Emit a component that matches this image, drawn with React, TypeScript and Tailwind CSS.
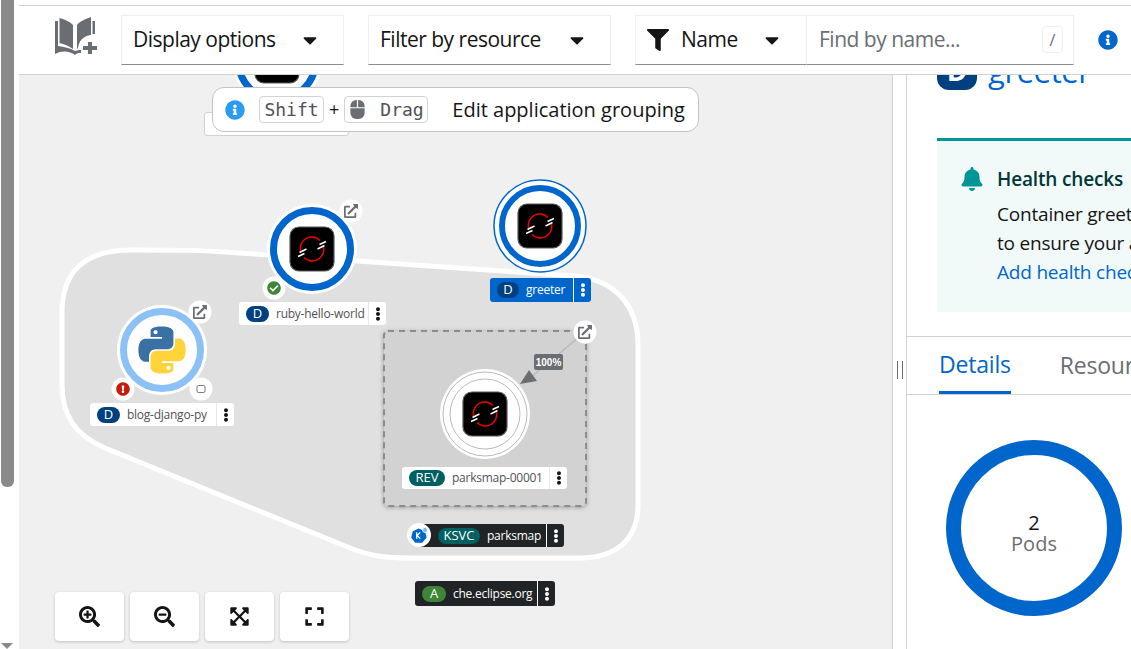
import React from 'react';
import {
  FaBell,
  FaCaretDown,
  FaCheckCircle,
  FaEllipsisV,
  FaExclamationCircle,
  FaExpand,
  FaExpandArrowsAlt,
  FaExternalLinkAlt,
  FaFilter,
  FaInfoCircle,
  FaMouse,
  FaSearchMinus,
  FaSearchPlus,
} from 'react-icons/fa';

const SANS = "font-['Open_Sans','Noto_Sans',sans-serif]";

const PY_BLUE =
  'M14.25.18l.9.2.73.26.59.3.45.32.34.34.25.34.16.33.1.3.04.26.02.2-.01.13V8.5l-.05.63-.13.55-.21.46-.26.38-.3.31-.33.25-.35.19-.35.14-.33.1-.3.07-.26.04-.21.02H8.77l-.69.05-.59.14-.5.22-.41.27-.33.32-.27.35-.2.36-.15.37-.1.35-.07.32-.04.27-.02.21v3.06H3.17l-.21-.03-.28-.07-.32-.12-.35-.18-.36-.26-.36-.36-.35-.46-.32-.59-.28-.73-.21-.88-.14-1.05-.05-1.23.06-1.22.16-1.04.24-.87.32-.71.36-.57.4-.44.42-.33.42-.24.4-.16.36-.1.32-.05.24-.01h.16l.06.01h8.16v-.83H6.18l-.01-2.75-.02-.37.05-.34.11-.31.17-.28.25-.26.31-.23.38-.2.44-.18.51-.15.58-.12.64-.1.71-.06.77-.04.84-.02 1.27.05zm-6.3 1.98l-.23.33-.08.41.08.41.23.34.33.22.41.09.41-.09.33-.22.23-.34.08-.41-.08-.41-.23-.33-.33-.22-.41-.09-.41.09z';
const PY_YELLOW =
  'M21.04 6.11l.28.06.32.12.35.18.36.27.36.35.35.47.32.59.28.73.21.88.14 1.04.05 1.23-.06 1.23-.16 1.04-.24.86-.32.71-.36.57-.4.45-.42.33-.42.24-.4.16-.36.09-.32.05-.24.02-.16-.01h-8.22v.82h5.84l.01 2.76.02.36-.05.34-.11.31-.17.29-.25.25-.31.24-.38.2-.44.17-.51.15-.58.13-.64.09-.71.07-.77.04-.84.01-1.27-.04-1.07-.14-.9-.2-.73-.25-.59-.3-.45-.33-.34-.34-.25-.34-.16-.33-.1-.3-.04-.25-.02-.2.01-.13v-5.34l.05-.64.13-.54.21-.46.26-.38.3-.32.33-.24.35-.2.35-.14.33-.1.3-.06.26-.04.21-.02.13-.01h5.84l.69-.05.59-.14.5-.21.41-.28.33-.32.27-.35.2-.36.15-.36.1-.35.07-.32.04-.28.02-.21V6.07h2.09l.14.01zm-6.47 14.25l-.23.33-.08.41.08.41.23.33.33.23.41.08.41-.08.33-.23.23-.33.08-.41-.08-.41-.23-.33-.33-.23-.41-.08-.41.08z';

const ShiftLogo = ({ cx, cy }: { cx: number; cy: number }) => (
  <g transform={`translate(${cx} ${cy})`}>
    <rect x="-22" y="-22" width="44" height="44" rx="9" fill="#000" stroke="#55585c" strokeWidth="1.2" />
    <path d="M-11.5 2A11.5 11.5 0 0 1 8 -8.5" fill="none" stroke="#e00" strokeWidth="1.6" />
    <path d="M11.5 -2A11.5 11.5 0 0 1 -8 8.5" fill="none" stroke="#e00" strokeWidth="1.6" />
    <path d="M7.5 -4.5L14 -7.5M5.5 0L12.5 -3.5M-14 7.5L-7.5 4.5M-12.5 3.5L-5.5 0" stroke="#fff" strokeWidth="1.4" />
  </g>
);

const Node = ({ cx, cy, ring = '#06c' }: { cx: number; cy: number; ring?: string }) => (
  <g>
    <circle cx={cx} cy={cy} r="45" fill="#fff" />
    <circle cx={cx} cy={cy} r="38.5" fill="none" stroke={ring} strokeWidth="7" />
  </g>
);

const Decorator = ({ cx, cy }: { cx: number; cy: number }) => (
  <circle cx={cx} cy={cy} r="11.5" fill="#fff" />
);

const Badge = ({ text, className }: { text: string; className: string }) => (
  <span className={`flex h-[16px] items-center justify-center rounded-full text-[13px] text-white ${className}`}>{text}</span>
);

const Label = ({
  className,
  badge,
  badgeClass,
  name,
  tone = 'light',
}: {
  className: string;
  badge: string;
  badgeClass: string;
  name: string;
  tone?: 'light' | 'blue' | 'dark';
}) => {
  const box = tone === 'light' ? 'bg-white text-[#4f5255]' : tone === 'blue' ? 'bg-[#06c] text-white' : 'bg-[#212427] text-white';
  const line = tone === 'light' ? 'border-[#e8e8e8]' : 'border-white';
  return (
    <div className={`absolute flex items-stretch rounded-[3px] text-[12px] whitespace-nowrap ${SANS} ${box} ${className}`}>
      <div className="flex min-w-0 flex-1 items-center gap-[7px] pl-[7px]">
        <Badge text={badge} className={badgeClass} />
        <span className="tracking-[-0.25px]">{name}</span>
      </div>
      <div className={`flex w-[18px] items-center justify-center border-l ${line}`}>
        <FaEllipsisV className={`text-[14px] ${tone === 'light' ? 'text-[#151515]' : 'text-white'}`} />
      </div>
    </div>
  );
};

const Select = ({ label, className }: { label: string; className: string }) => (
  <div className={`flex h-[50px] items-center justify-between border border-[#f0f0f0] border-b-[#8a8d90] pr-[22px] pl-[11px] text-[21px] text-[#151515] ${className}`}>
    <span className="tracking-[-0.5px]">{label}</span>
    <FaCaretDown className="text-[22px]" />
  </div>
);

const ZoomButton = ({ children }: { children: React.ReactNode }) => (
  <div className="flex h-[49px] w-[69px] items-center justify-center rounded-[4px] bg-white text-[21px] text-[#151515] shadow-[0_1px_3px_rgba(0,0,0,0.2)]">
    {children}
  </div>
);

const Topology = () => (
  <div className="relative min-w-0 flex-1 overflow-hidden border-r border-[#d2d2d2] bg-[#f0f0f0]">
    <svg viewBox="19 75 873 574" className="absolute top-0 left-0 h-[574px] w-[873px]">
      <path
        d="M62 312C62 272 85 250 130 250C180 250 200 250 240 253L575 276C615 280 638 305 638 345V505C638 540 615 558 580 558H410C385 558 370 556 350 548L105 448C75 435 62 415 62 385Z"
        fill="#e0e0e0"
        stroke="#fff"
        strokeWidth="5"
      />
      <Node cx={277} cy={61} />
      <ShiftLogo cx={277} cy={61} />

      <Node cx={312} cy={249} />
      <ShiftLogo cx={312} cy={249} />
      <Decorator cx={351} cy={211} />
      <Decorator cx={274} cy={288} />

      <Node cx={162} cy={350} ring="#8bc1f7" />
      <g transform="translate(138.5 326.5) scale(1.96)">
        <path d={PY_BLUE} fill="#3a70a3" fillRule="evenodd" />
        <path d={PY_YELLOW} fill="#ffd43b" fillRule="evenodd" />
      </g>
      <Decorator cx={200} cy={312} />
      <Decorator cx={123} cy={389} />
      <Decorator cx={201} cy={389} />
      <rect x="197" y="385.5" width="8" height="7" rx="1.5" fill="none" stroke="#555" strokeWidth="0.8" />

      <circle cx={540} cy={226} r="46" fill="#fff" stroke="#06c" strokeWidth="1.5" />
      <circle cx={540} cy={226} r="38" fill="none" stroke="#06c" strokeWidth="6" />
      <ShiftLogo cx={540} cy={226} />

      <rect
        x="384"
        y="331"
        width="202"
        height="175"
        rx="4"
        fill="#d2d2d2"
        stroke="#8a8d90"
        strokeWidth="2"
        strokeDasharray="6 5"
        className="drop-shadow-[0_1px_2px_rgba(0,0,0,0.3)]"
      />
      <circle cx={485} cy={414} r="45" fill="#fff" />
      <circle cx={485} cy={414} r="42" fill="none" stroke="#b8bbbe" strokeWidth="1" />
      <circle cx={485} cy={414} r="35" fill="none" stroke="#b8bbbe" strokeWidth="1" />
      <ShiftLogo cx={485} cy={414} />
      <path d="M585 332L530 378" stroke="#b8bbbe" strokeWidth="1.5" />
      <path d="M520 384L529 370L537 381Z" fill="#6a6e73" />
      <Decorator cx={585} cy={332} />
    </svg>

    <FaExternalLinkAlt className="absolute top-[129px] left-[325px] text-[14px] text-[#6a6e73]" />
    <FaCheckCircle className="absolute top-[206px] left-[248px] text-[14px] text-[#3e8635]" />
    <FaExternalLinkAlt className="absolute top-[230px] left-[174px] text-[14px] text-[#6a6e73]" />
    <FaExclamationCircle className="absolute top-[307px] left-[97px] text-[14px] text-[#c9190b]" />
    <FaExternalLinkAlt className="absolute top-[250px] left-[559px] text-[14px] text-[#6a6e73]" />

    <div className="absolute top-[279px] left-[515px] flex h-[16px] w-[29px] items-center justify-center rounded-[2px] bg-[#6a6e73] font-['Liberation_Sans',sans-serif] text-[10px] font-bold text-white">
      100%
    </div>

    <div className="absolute top-[37px] left-[185px] h-[24px] w-[145px] rounded-[3px] border border-[#d2d2d2] bg-white" />

    <Label className="top-[227px] left-[220px] h-[23px] w-[147px]" badge="D" badgeClass="w-[23px] bg-[#004080]" name="ruby-hello-world" />
    <Label className="top-[328px] left-[71px] h-[23px] w-[144px]" badge="D" badgeClass="w-[23px] bg-[#004080]" name="blog-django-py" />
    <Label className="top-[203px] left-[471px] h-[24px] w-[101px]" badge="D" badgeClass="w-[22px] bg-[#004080]" name="greeter" tone="blue" />
    <Label className="top-[392px] left-[383px] h-[22px] w-[165px]" badge="REV" badgeClass="w-[36px] bg-[#005f60]" name="parksmap-00001" />
    <Label className="top-[449px] left-[400px] h-[23px] w-[145px] pl-[12px]" badge="KSVC" badgeClass="w-[42px] bg-[#005f60]" name="parksmap" tone="dark" />
    <Label className="top-[506px] left-[396px] h-[25px] w-[140px]" badge="A" badgeClass="w-[24px] bg-[#3e8635]" name="che.eclipse.org" tone="dark" />

    <div className="absolute top-[448px] left-[388px] flex h-[24px] w-[24px] items-center justify-center rounded-full bg-white">
      <svg viewBox="0 0 24 24" className="h-[19px] w-[19px]">
        <path d="M11 3L19 6.5L21 14.5L15.5 21H6.5L1.5 14.5L3.5 6.5Z" fill="#06c" />
        <path d="M8.5 8V16M13 8L9 12L13 16" stroke="#fff" strokeWidth="1.6" fill="none" />
        <circle cx="19" cy="5" r="3.2" fill="#73bcf7" stroke="#fff" strokeWidth="1" />
      </svg>
    </div>

    <div className={`absolute top-[12px] left-[193px] flex h-[45px] w-[487px] items-center rounded-[12px] border border-[#c4c4c4] bg-white pl-[12px] text-[#151515] ${SANS}`}>
      <FaInfoCircle className="text-[20px] text-[#2b9af3]" />
      <kbd className="ml-[14px] flex h-[27px] w-[65px] items-center justify-center rounded-[4px] border border-[#d2d2d2] font-['DejaVu_Sans_Mono',monospace] text-[18px] text-[#4f5255]">
        Shift
      </kbd>
      <span className="mx-[5px] text-[18px]">+</span>
      <kbd className="flex h-[27px] w-[84px] items-center gap-[13px] rounded-[4px] border border-[#d2d2d2] pl-[3px] font-['DejaVu_Sans_Mono',monospace] text-[18px] text-[#4f5255]">
        <FaMouse className="text-[19px] text-[#6a6e73]" />
        Drag
      </kbd>
      <span className="ml-[24px] text-[20px] whitespace-nowrap">Edit application grouping</span>
    </div>

    <div className="absolute top-[517px] left-[36px] flex gap-[6px]">
      <ZoomButton>
        <FaSearchPlus />
      </ZoomButton>
      <ZoomButton>
        <FaSearchMinus />
      </ZoomButton>
      <ZoomButton>
        <FaExpandArrowsAlt />
      </ZoomButton>
      <ZoomButton>
        <FaExpand />
      </ZoomButton>
    </div>
  </div>
);

const SidePanel = () => (
  <div className={`flex w-[225px] shrink-0 flex-col overflow-hidden border-l border-[#d2d2d2] bg-white whitespace-nowrap ${SANS}`}>
    <div className="-mt-[26px] flex h-[41px] shrink-0 items-center gap-[11px] pl-[30px]">
      <span className="flex h-[41px] w-[40px] items-center justify-center rounded-[12px] bg-[#004080] text-[28px] font-bold text-white">D</span>
      <span className="pt-[4px] text-[31px] leading-none tracking-[-0.4px] text-[#06c]">greeter</span>
    </div>
    <div className="mt-[48px] ml-[30px] h-[174px] w-[240px] shrink-0 border-t-[3px] border-[#009596] bg-[#f2f9f9] pt-[24px] pl-[23px]">
      <div className="flex items-center gap-[13px]">
        <FaBell className="text-[24px] text-[#009596]" />
        <span className="text-[19px] font-semibold tracking-[-0.15px] text-[#003737]">Health checks</span>
      </div>
      <div className="mt-[6px] ml-[37px] text-[19px] leading-[29px] tracking-[-0.2px] text-[#151515]">
        <div>Container greeter does</div>
        <div>to ensure your application</div>
        <div className="text-[#06c]">Add health checks</div>
      </div>
    </div>
    <div className="mt-[24px] flex h-[59px] shrink-0 items-end gap-[49px] border-y border-[#d2d2d2] pl-[32px] text-[23px]">
      <div className="flex h-full items-center border-b-[3px] border-[#06c] tracking-[-0.2px] text-[#06c]">Details</div>
      <div className="flex h-full items-center tracking-[-0.2px] text-[#6a6e73]">Resources</div>
    </div>
    <div className="mt-[45px] ml-[39px] flex h-[176px] w-[176px] shrink-0 flex-col items-center justify-center rounded-full border-[15px] border-[#06c] pt-[9px] text-[20px] leading-[21px]">
      <span className="text-[#151515]">2</span>
      <span className="text-[#6a6e73]">Pods</span>
    </div>
  </div>
);

export default function App() {
  return (
    <div className="flex h-[649px] w-[1131px] overflow-hidden bg-white">
      {/* native scrollbar */}
      <div className="relative w-[19px] shrink-0 bg-white">
        <div className="ml-px h-[487px] w-[13px] rounded-b-[6px] bg-[#8a8a8a]" />
        <div className="absolute bottom-0 left-px h-0 w-0 border-x-[6px] border-t-[6px] border-x-transparent border-t-[#8a8a8a]" />
      </div>

      <div className="flex min-w-0 flex-1 flex-col pt-[5px]">
        <div className={`relative z-10 flex h-[70px] shrink-0 items-center border-y border-[#d2d2d2] bg-white pb-[1px] ${SANS}`}>
          <svg viewBox="0 0 54 50" className="ml-[31px] -mt-[10px] h-[50px] w-[54px] shrink-0">
            <path d="M9.5 8C14 9 19 11 23 15V39C19 36 14 34 9.5 33Z" fill="#6a6e73" />
            <path d="M27 15C30 11 36 9 41 7V25C33 26 29 31 28 38L27 39Z" fill="#6a6e73" />
            <path d="M5 11H8V36C14 37 20 38 25 41C27 40 29 40 31 40V43C29 43 27 43 25 45C20 41 12 40 5 44Z" fill="#6a6e73" />
            <path d="M42.5 11H45V24H42.5Z" fill="#6a6e73" />
            <path d="M38 32H42V36H47V40H42V44H38V40H33V36H38Z" fill="#6a6e73" />
          </svg>
          <Select label="Display options" className="ml-[17px] w-[223px]" />
          <Select label="Filter by resource" className="ml-[24px] w-[243px]" />
          <div className="ml-[24px] flex h-[50px] w-[172px] items-center border border-[#f0f0f0] border-b-[#8a8d90] pl-[11px] text-[21px] text-[#151515]">
            <FaFilter className="text-[22px]" />
            <span className="ml-[12px] tracking-[-0.5px]">Name</span>
            <FaCaretDown className="ml-[23px] text-[22px]" />
          </div>
          <div className="flex h-[50px] w-[267px] items-center justify-between border border-l-0 border-[#f0f0f0] border-b-[#8a8d90] pr-[10px] pl-[12px] text-[21px] text-[#6a6e73]">
            <span className="tracking-[-0.5px]">Find by name...</span>
            <span className="flex h-[27px] w-[21px] items-center justify-center rounded-[4px] border border-[#f0f0f0] text-[16px]">/</span>
          </div>
          <FaInfoCircle className="ml-[24px] text-[20px] text-[#06c]" />
        </div>

        <div className="flex min-h-0 flex-1">
          <Topology />
          <div className="flex w-[13px] shrink-0 items-center justify-center bg-white pt-[16px]">
            <div className="h-[18px] w-[6px] border-x border-[#6a6e73]" />
          </div>
          <SidePanel />
        </div>
      </div>
    </div>
  );
}
